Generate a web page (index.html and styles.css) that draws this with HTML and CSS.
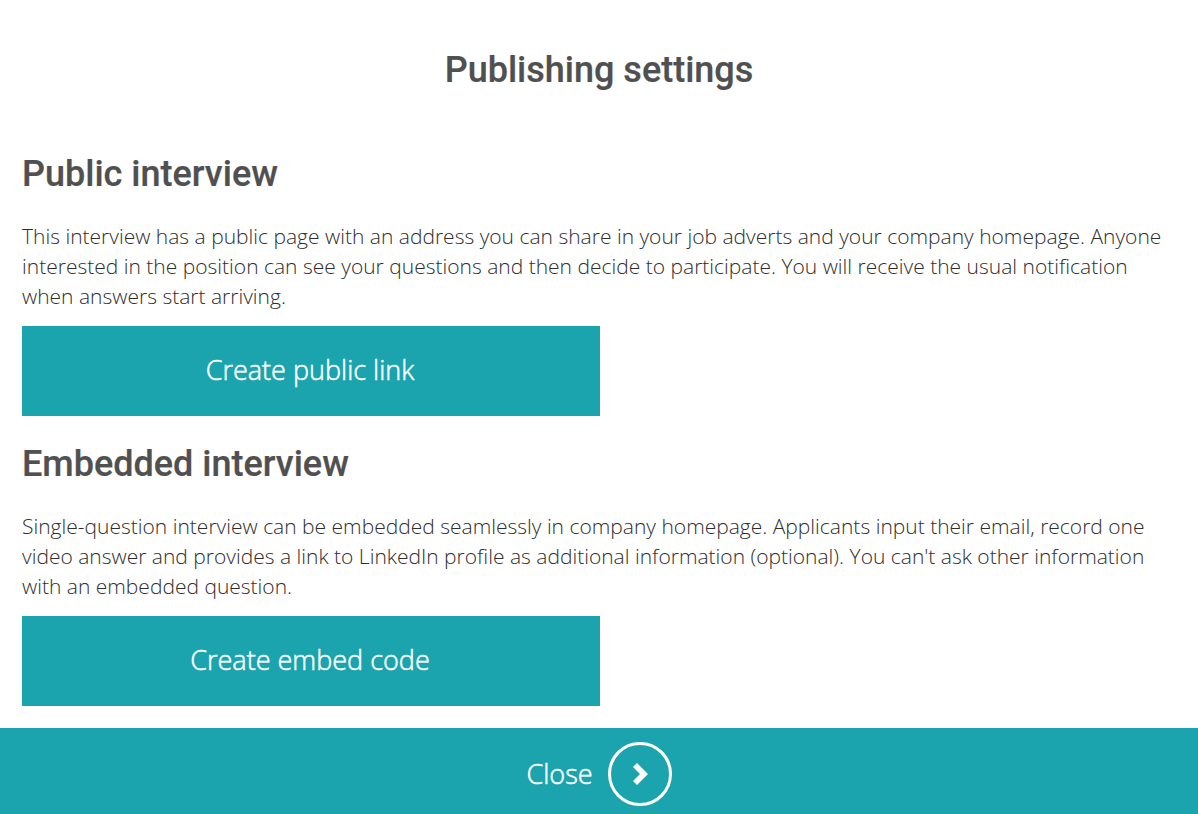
FILE: index.html
```html
<!DOCTYPE html>
<html lang="en">
<head>
<meta charset="utf-8">
<title>Publishing settings</title>
<link rel="stylesheet" href="styles.css">
</head>
<body>
<main class="content">
<h1 class="title">Publishing settings</h1>
<section class="block">
<h2 class="heading">Public interview</h2>
<p class="text">This interview has a public page with an address you can share in your job adverts and your company homepage. Anyone interested in the position can see your questions and then decide to participate. You will receive the usual notification when answers start arriving.</p>
<button class="action">Create public link</button>
</section>
<section class="block">
<h2 class="heading">Embedded interview</h2>
<p class="text">Single-question interview can be embedded seamlessly in company homepage. Applicants input their email, record one video answer and provides a link to LinkedIn profile as additional information (optional). You can't ask other information with an embedded question.</p>
<button class="action">Create embed code</button>
</section>
</main>
<footer class="footer">
<span class="close-label">Close</span>
<span class="close-icon"><svg class="chevron" width="17" height="22" viewBox="0 0 17 22"><path d="M1 4L5 0L16 11L5 22L1 18L8 11Z" fill="#fff"/></svg></span>
</footer>
</body>
</html>
```
FILE: styles.css
```css
* { box-sizing: border-box; }
html, body { margin: 0; height: 100%; }
body { width: 1198px; height: 814px; overflow: hidden; background: #fff; color: #4d4d4d; font-family: "Open Sans", sans-serif; display: flex; flex-direction: column; }
.content { flex: 1; min-height: 0; padding: 0 22px; }
.title { margin: 0; padding-top: 47px; height: 151px; text-align: center; font: 500 36px/46px Roboto, sans-serif; color: #505050; -webkit-text-stroke: 0.2px #505050; }
.heading { margin: 0; font: 500 36px/46px Roboto, sans-serif; color: #505050; -webkit-text-stroke: 0.2px #505050; }
.block + .block { margin-top: 25px; }
.text { margin: 24px 0 15px; font-size: 21px; line-height: 30px; font-weight: 300; color: #2e2e2e; }
.action { display: block; width: 578px; height: 90px; padding: 0 2px 4px 0; border: 0; background: #1ba4ad; color: #fff; font: 300 27px "Open Sans", sans-serif; -webkit-text-stroke: 0.5px #fff; }
.footer { flex: none; height: 86px; padding-top: 6px; background: #1ba4ad; display: flex; align-items: center; justify-content: center; gap: 15px; color: #fff; }
.close-label { margin-bottom: 2px; font-size: 27px; font-weight: 300; -webkit-text-stroke: 0.5px #fff; }
.close-icon { width: 64px; height: 64px; border: 3px solid #fff; border-radius: 50%; display: flex; align-items: center; justify-content: center; }
.chevron { margin-left: 2px; }
```
